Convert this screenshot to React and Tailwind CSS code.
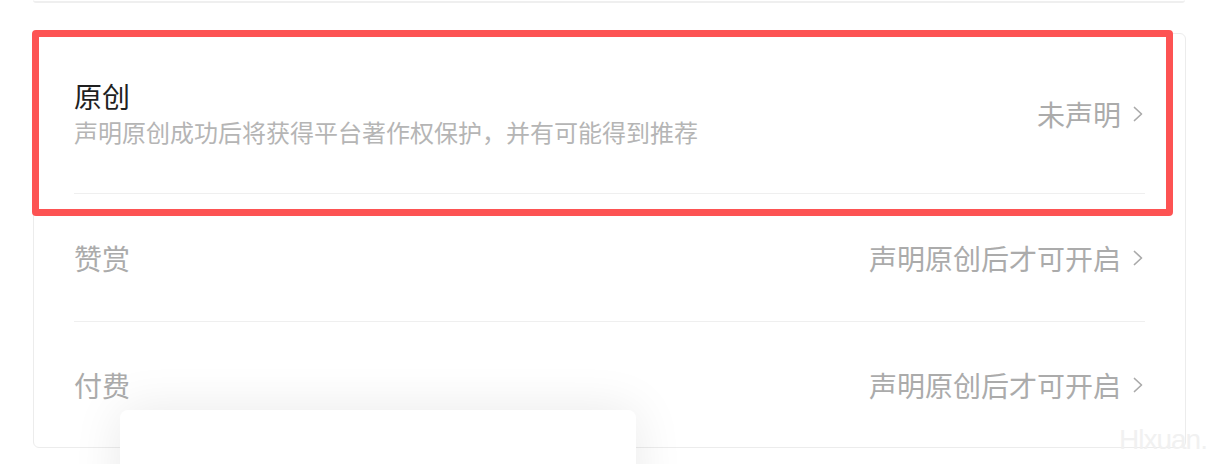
// Declaration settings — 原创 / 赞赏 / 付费 rows with an annotation box
import React from 'react';

const rows = [
  {
    title: '原创',
    desc: '声明原创成功后将获得平台著作权保护，并有可能得到推荐',
    value: '未声明',
    active: true,
    height: 'h-[160px]',
  },
  { title: '赞赏', value: '声明原创后才可开启', height: 'h-[128px]' },
  { title: '付费', value: '声明原创后才可开启', height: 'h-[125px]', last: true },
];

function Chevron() {
  return (
    <svg width="10" height="16" viewBox="0 0 10 16" className="ml-[12px] shrink-0">
      <polyline
        points="1.5,1.5 8.5,8 1.5,14.5"
        fill="none"
        stroke="#aaaaaa"
        strokeWidth="1.7"
        strokeLinecap="round"
        strokeLinejoin="round"
      />
    </svg>
  );
}

function Row({ row }) {
  return (
    <div
      className={`flex items-center justify-between ${row.height} ${
        row.last ? '' : 'border-b border-[#efefef]'
      }`}
    >
      <div className="flex flex-col">
        <span
          className={`text-[28px] leading-[36px] ${
            row.active ? 'text-[#1f1f1f]' : 'text-[#ababab]'
          }`}
        >
          {row.title}
        </span>
        {row.desc && (
          <span className="text-[24px] leading-[36px] text-[#b5b5b5]">{row.desc}</span>
        )}
      </div>
      <div className="flex items-center mr-[2px]">
        <span className="text-[28px] leading-[36px] text-[#ababab]">{row.value}</span>
        <Chevron />
      </div>
    </div>
  );
}

export default function App() {
  return (
    <div
      className="relative w-[1212px] h-[464px] overflow-hidden bg-white"
      style={{ fontFamily: '"Noto Sans CJK SC", "Noto Sans", sans-serif' }}
    >
      {/* bottom edge of the card above */}
      <div className="ml-[33px] w-[1152px] h-[3px] border-b-2 border-[#efefef] rounded-b-md" />

      {/* settings card */}
      <div className="ml-[33px] mt-[30px] w-[1153px] border border-[#ececec] rounded-md bg-white px-[40px]">
        {rows.map((row) => (
          <Row key={row.title} row={row} />
        ))}
      </div>

      {/* annotation box */}
      <div className="absolute left-[32px] top-[30px] w-[1141px] h-[186px] border-[7px] border-[#fd5353] rounded-[4px]" />

      {/* sheet peeking from below */}
      <div className="absolute left-[120px] top-[410px] w-[516px] h-[120px] bg-white rounded-[8px] shadow-[0_0_50px_rgba(0,0,0,0.09)]" />

      {/* watermark */}
      <span
        className="absolute left-[1119px] top-[420px] text-[28px] leading-[40px] tracking-[-1px] text-[#f1f1f1] whitespace-nowrap"
        style={{ fontFamily: '"Liberation Sans", sans-serif' }}
      >
        Hlxuan.
      </span>
    </div>
  );
}
